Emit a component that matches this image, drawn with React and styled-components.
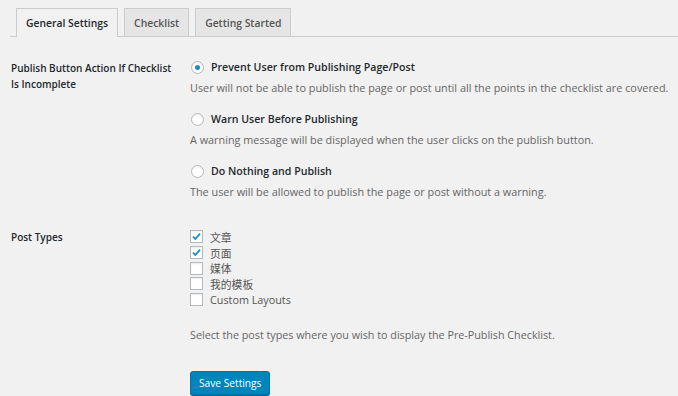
import React from "react";
import styled, { createGlobalStyle } from "styled-components";

const GlobalStyle = createGlobalStyle`
  html, body {
    margin: 0;
    padding: 0;
    background: #f1f1f1;
  }
  body {
    font-family: "Open Sans", "Noto Sans CJK SC", sans-serif;
    font-size: 10.8px;
    color: #444;
  }
`;

const Page = styled.div`
  width: 678px;
  height: 396px;
  overflow: hidden;
`;

const TabBar = styled.div`
  display: flex;
  align-items: flex-end;
  gap: 6px;
  margin: 8px 0 0 10px;
  padding-left: 6px;
  border-bottom: 1px solid #ccc;
  height: 28px;
`;

const Tab = styled.div`
  box-sizing: border-box;
  padding: 0 9px;
  display: flex;
  align-items: center;
  border: 1px solid #ccc;
  border-bottom: none;
  margin-bottom: ${(p) => (p.$active ? "-1px" : "0")};
  height: ${(p) => (p.$active ? "29px" : "28px")};
  background: ${(p) => (p.$active ? "#f1f1f1" : "#e5e5e5")};
  color: ${(p) => (p.$active ? "#23282d" : "#555")};
  font-weight: 600;
  font-size: 10.35px;
`;

const Form = styled.div`
  display: grid;
  grid-template-columns: 180px 1fr;
  padding: 21px 0 0 11px;
`;

const Label = styled.div`
  font-weight: 600;
  font-size: 10px;
  color: #23282d;
  line-height: 16px;
  padding-top: 2px;
  grid-column: 1;
`;

const Field = styled.div`
  grid-column: 2;
  display: flex;
  flex-direction: column;
  margin-left: -1px;
`;

const RadioOption = styled.div`
  display: flex;
  flex-direction: column;
  margin-bottom: ${(p) => (p.$last ? "0" : "14px")};
`;

const RadioRow = styled.label`
  display: flex;
  align-items: center;
  gap: 7px;
  height: 18px;
  font-weight: 600;
  color: #23282d;
  font-size: 10.6px;
  padding-left: 1px;
`;

const Radio = styled.span`
  width: 13px;
  height: 13px;
  box-sizing: border-box;
  border-radius: 50%;
  border: 1px solid #b4b9be;
  background: #fff;
  box-shadow: inset 0 1px 2px rgba(0, 0, 0, 0.07);
  display: flex;
  align-items: center;
  justify-content: center;
  &::after {
    content: "";
    display: ${(p) => (p.$checked ? "block" : "none")};
    width: 5px;
    height: 5px;
    border-radius: 50%;
    background: #1e8cbe;
  }
`;

const Desc = styled.div`
  color: #666;
  line-height: 16px;
  margin-top: 4px;
  font-size: 10.85px;
  white-space: nowrap;
`;

const Spacer = styled.div`
  grid-column: 1 / 3;
  height: ${(p) => p.$h}px;
`;

const CheckList = styled.div`
  display: flex;
  flex-direction: column;
  padding-top: 2px;
`;

const CheckRow = styled.label`
  display: flex;
  align-items: center;
  gap: 7px;
  height: 15.7px;
  color: #555;
  font-size: 10.8px;
`;

const Box = styled.span`
  width: 13px;
  height: 13px;
  box-sizing: border-box;
  border: 1px solid #b4b9be;
  background: #fff;
  box-shadow: inset 0 1px 2px rgba(0, 0, 0, 0.07);
  display: flex;
  align-items: center;
  justify-content: center;
`;

const Hint = styled.div`
  color: #666;
  margin-top: 20px;
  line-height: 16px;
  font-size: 10.75px;
`;

const Button = styled.button`
  margin-top: 28px;
  align-self: flex-start;
  height: 24px;
  padding: 0 8px;
  border: 1px solid #0073aa;
  border-radius: 3px;
  background: #0085ba;
  color: #fff;
  font-family: "Open Sans", sans-serif;
  font-size: 10.2px;
  box-shadow: 0 1px 0 #006799;
`;

const Check = () => (
  <svg width="11" height="11" viewBox="0 0 11 11">
    <path d="M2 5.6 L4.4 8 L9 2.6" fill="none" stroke="#1e8cbe" strokeWidth="1.8" />
  </svg>
);

const radios = [
  {
    title: "Prevent User from Publishing Page/Post",
    desc: "User will not be able to publish the page or post until all the points in the checklist are covered.",
    checked: true,
  },
  {
    title: "Warn User Before Publishing",
    desc: "A warning message will be displayed when the user clicks on the publish button.",
  },
  {
    title: "Do Nothing and Publish",
    desc: "The user will be allowed to publish the page or post without a warning.",
  },
];

const postTypes = [
  { name: "文章", checked: true },
  { name: "页面", checked: true },
  { name: "媒体" },
  { name: "我的模板" },
  { name: "Custom Layouts" },
];

export default function App() {
  return (
    <Page>
      <GlobalStyle />
      <TabBar>
        <Tab $active>General Settings</Tab>
        <Tab>Checklist</Tab>
        <Tab>Getting Started</Tab>
      </TabBar>
      <Form>
        <Label>
          Publish Button Action If Checklist
          <br />
          Is Incomplete
        </Label>
        <Field>
          {radios.map((r, i) => (
            <RadioOption key={r.title} $last={i === radios.length - 1}>
              <RadioRow>
                <Radio $checked={r.checked} />
                {r.title}
              </RadioRow>
              <Desc>{r.desc}</Desc>
            </RadioOption>
          ))}
        </Field>
        <Spacer $h={27} />
        <Label>Post Types</Label>
        <Field>
          <CheckList>
            {postTypes.map((t) => (
              <CheckRow key={t.name}>
                <Box>{t.checked && <Check />}</Box>
                {t.name}
              </CheckRow>
            ))}
          </CheckList>
          <Hint>Select the post types where you wish to display the Pre-Publish Checklist.</Hint>
          <Button>Save Settings</Button>
        </Field>
      </Form>
    </Page>
  );
}
